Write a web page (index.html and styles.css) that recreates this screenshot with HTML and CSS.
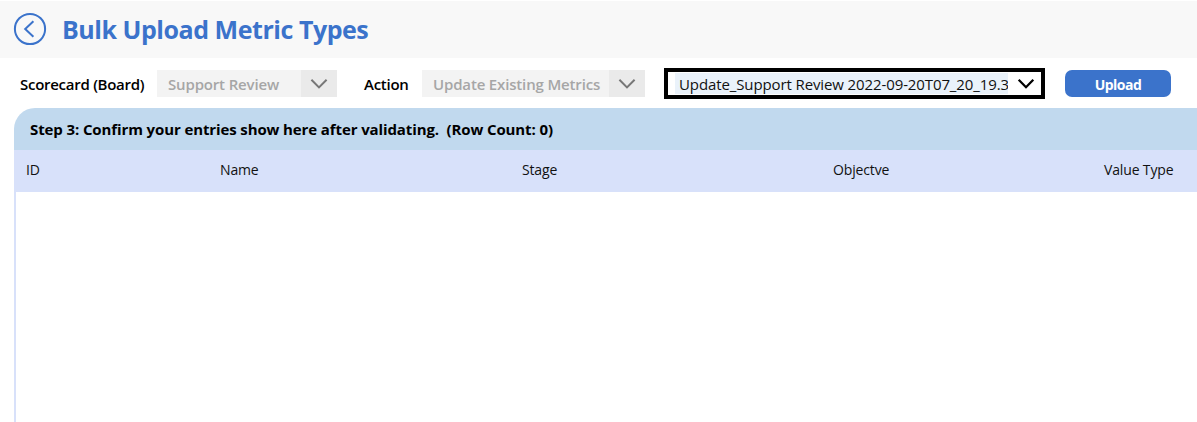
FILE: index.html
```html
<!DOCTYPE html>
<html lang="en">
<head>
<meta charset="utf-8">
<title>Bulk Upload Metric Types</title>
<link rel="stylesheet" href="styles.css">
</head>
<body>
<header class="header">
  <svg class="back" viewBox="0 0 34 34" role="img" aria-label="Back"><circle cx="17" cy="17" r="15.1"/><path d="M20.4 9.2 12.2 17l8.2 7.8"/></svg>
  <h1 class="title">Bulk Upload Metric Types</h1>
</header>
<div class="toolbar">
  <span class="label label-board">Scorecard (Board)</span>
  <div class="select select-board"><span class="value value-board">Support Review</span><span class="toggle"><svg class="chevron" viewBox="0 0 18 12"><path d="m1.4 1.8 7.6 7.6 7.6-7.6"/></svg></span></div>
  <span class="label label-action">Action</span>
  <div class="select select-action"><span class="value value-action">Update Existing Metrics</span><span class="toggle"><svg class="chevron" viewBox="0 0 18 12"><path d="m1.4 1.8 7.6 7.6 7.6-7.6"/></svg></span></div>
  <div class="combo"><span class="combo-value">Update_Support Review 2022-09-20T07_20_19.3</span><svg class="chevron chevron-dark" viewBox="0 0 18 12"><path d="m1.7 1.8 7.3 7.4 7.3-7.4"/></svg></div>
  <button class="upload">Upload</button>
</div>
<main class="grid">
  <h2 class="step">Step 3: Confirm your entries show here after validating.&nbsp; (Row Count: 0)</h2>
  <div class="columns"><span class="col-id">ID</span><span class="col-name">Name</span><span class="col-stage">Stage</span><span class="col-objective">Objectve</span><span class="col-type">Value Type</span></div>
  <div class="rows"></div>
</main>
</body>
</html>
```
FILE: styles.css
```css
* { box-sizing: border-box; }
body { margin: 0; height: 422px; display: flex; flex-direction: column; overflow: hidden; background: #fff; color: #111; font-family: "Open Sans", "Noto Sans", sans-serif; white-space: nowrap; }
.header { flex: none; height: 57px; margin-top: 1px; padding: 0 0 1px 13px; display: flex; align-items: center; background: #f8f8f8; }
.back { width: 34px; height: 34px; margin-right: 15px; fill: none; stroke: #3b73cb; stroke-width: 2; }
.title { margin: 0; color: #3b73cb; font-size: 25px; font-weight: 700; line-height: 34px; letter-spacing: -.46px; }
.toolbar { flex: none; height: 50px; padding: 10px 0 0 20px; display: flex; align-items: flex-start; font-size: 15px; font-weight: 600; line-height: 32px; }
.label { letter-spacing: -.27px; color: #000; }
.label-board { width: 137px; }
.label-action { width: 58px; }
.select { height: 27px; margin-top: 2px; display: flex; background: #f3f3f3; color: #a6a6a6; }
.select-board { width: 180px; margin-right: 27px; }
.select-action { width: 223px; margin-right: 19px; }
.value { flex: 1; padding-left: 11px; letter-spacing: -.16px; line-height: 29px; }
.toggle { width: 36px; display: flex; align-items: center; justify-content: center; background: #eaeaea; }
.chevron { flex: none; width: 18px; height: 12px; fill: none; stroke: #777; stroke-width: 2; }
.combo { width: 381px; height: 31px; padding: 0 6px 0 7px; display: flex; align-items: center; border: 4px solid #000; }
.combo-value { flex: none; width: 333px; height: 21px; padding-left: 4px; margin-right: 9px; overflow: hidden; background: #eaf2fa; font-size: 15px; font-weight: 400; line-height: 22px; letter-spacing: -.11px; }
.chevron-dark { stroke: #000; stroke-width: 2.3; }
.upload { width: 106px; height: 27px; margin: 2px 0 0 20px; padding: 0; border: 0; border-radius: 7px; background: #3b73cb; color: #fff; font: 700 14px/29px "Open Sans", sans-serif; letter-spacing: -.5px; }
.grid { flex: 1; margin-left: 14px; display: flex; flex-direction: column; }
.step { height: 42px; margin: 0; padding-left: 16px; border-top-left-radius: 21px; background: #c1d9ee; color: #000; font-size: 15px; font-weight: 700; line-height: 42px; letter-spacing: -.11px; }
.columns { height: 42px; padding-left: 12px; display: grid; grid-template-columns: 194px 302px 311px 271px 1fr; background: #d8e1fa; font-size: 14px; line-height: 40px; letter-spacing: -.15px; }
.rows { flex: 1; border-left: 2px solid #d8e1fa; }
```
